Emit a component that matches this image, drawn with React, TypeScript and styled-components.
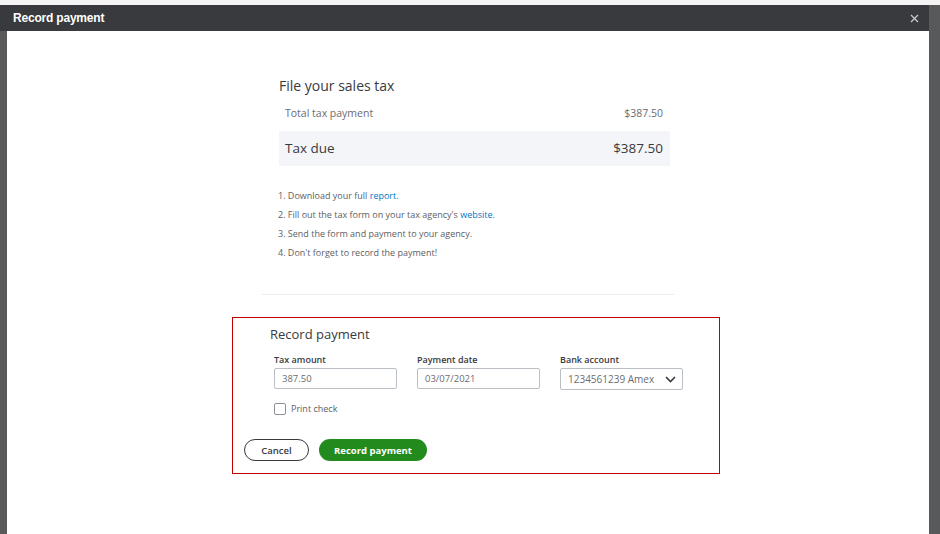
import { createGlobalStyle, styled } from 'styled-components';

const GlobalStyle = createGlobalStyle`
    html, body {
        margin: 0;
        padding: 0;
        background: #f4f4f4;
    }
    body {
        font-family: 'Open Sans', 'Liberation Sans', sans-serif;
        color: #393a3d;
    }
`;

const Screen = styled.div`
    width: 940px;
    height: 534px;
    padding-top: 5px;
    box-sizing: border-box;
    background: #f4f4f4;
    overflow: hidden;
`;

const Backdrop = styled.div`
    display: flex;
    height: 529px;
    background: #58595b;
    padding-left: 7px;
    padding-right: 11px;
`;

const Modal = styled.div`
    flex: 1;
    display: flex;
    flex-direction: column;
    background: #fff;
`;

const TitleBar = styled.div`
    height: 26px;
    background: #393a3d;
    display: flex;
    align-items: center;
    justify-content: space-between;
    padding: 0 10px 0 6px;
    margin-left: -7px;
`;

const TitleText = styled.span`
    font-family: 'Liberation Sans', Arial, sans-serif;
    font-weight: bold;
    font-size: 12px;
    color: #fff;
    letter-spacing: -0.2px;
    padding-left: 7px;
`;

const CloseButton = styled.span`
    display: flex;
    align-items: center;
    color: #c8c8c8;
`;

const Body = styled.div`
    display: flex;
    flex-direction: column;
    align-items: flex-start;
    padding-top: 46px;
`;

const Summary = styled.section`
    width: 391px;
    margin-left: 272px;
`;

const SectionTitle = styled.h2`
    margin: 0;
    font-size: 14px;
    line-height: 18px;
    font-weight: 400;
    color: #393a3d;
`;

const Row = styled.div<{ $big?: boolean }>`
    display: flex;
    justify-content: space-between;
    align-items: center;
    box-sizing: border-box;
    padding: 0 7px 0 6px;
    height: ${(p) => (p.$big ? '35px' : '24px')};
    margin-top: 6px;
    background: ${(p) => (p.$big ? '#f4f5f8' : 'transparent')};
    font-size: ${(p) => (p.$big ? '13.5px' : '10.5px')};
    line-height: ${(p) => (p.$big ? '33px' : '24px')};
    color: ${(p) => (p.$big ? '#393a3d' : '#6b6c72')};
`;

const Steps = styled.ol`
    list-style: none;
    margin: 20px 0 0 -1px;
    padding: 0;
    font-size: 9px;
    line-height: 19px;
    color: #5d5e63;
`;

const StepLink = styled.a`
    color: #0077c5;
    text-decoration: none;
`;

const Divider = styled.hr`
    width: 412px;
    margin: 32px 0 0 255px;
    border: 0;
    border-top: 1px solid #ececec;
`;

const RecordBox = styled.section`
    width: 488px;
    box-sizing: border-box;
    margin: 22px 0 0 225px;
    border: 1px solid #c00000;
    padding: 7px 11px 12px;
`;

const RecordTitle = styled.h3`
    margin: 0 0 0 26px;
    font-size: 13px;
    line-height: 18px;
    font-weight: 400;
    color: #393a3d;
`;

const Fields = styled.div`
    display: grid;
    grid-template-columns: 123px 123px 123px;
    column-gap: 20px;
    margin: 11px 0 0 30px;
`;

const Field = styled.label`
    display: flex;
    flex-direction: column;
    gap: 2px;
`;

const FieldLabel = styled.span`
    font-size: 9px;
    line-height: 12px;
    font-weight: 600;
    color: #393a3d;
`;

const Input = styled.div<{ $tall?: boolean }>`
    height: ${(p) => (p.$tall ? '22px' : '21px')};
    box-sizing: border-box;
    border: 1px solid #babec5;
    border-radius: 2px;
    display: flex;
    align-items: center;
    justify-content: space-between;
    padding: 0 6px 0 7px;
    font-size: 9.5px;
    color: #6b6c72;
`;

const SelectText = styled.span`
    font-size: 10px;
    color: #6b6c72;
`;

const CheckRow = styled.div`
    display: flex;
    align-items: center;
    gap: 5px;
    margin: 12px 0 0 30px;
`;

const CheckBox = styled.span`
    width: 12px;
    height: 12px;
    box-sizing: border-box;
    border: 1px solid #8d9096;
    border-radius: 2px;
`;

const CheckLabel = styled.span`
    font-size: 9px;
    color: #5d5e63;
`;

const Actions = styled.div`
    display: flex;
    gap: 10px;
    margin-top: 24px;
`;

const Button = styled.button<{ $primary?: boolean }>`
    height: 22px;
    box-sizing: border-box;
    border-radius: 11px;
    font-family: 'Open Sans', 'Liberation Sans', sans-serif;
    font-size: 9.5px;
    font-weight: ${(p) => (p.$primary ? 700 : 600)};
    padding: 0;
    width: ${(p) => (p.$primary ? '108px' : '65px')};
    border: ${(p) => (p.$primary ? '0' : '1.5px solid #393a3d')};
    background: ${(p) => (p.$primary ? '#238b1e' : '#fff')};
    color: ${(p) => (p.$primary ? '#fff' : '#393a3d')};
`;

const App = () => (
    <>
        <GlobalStyle />
        <Screen>
            <Backdrop>
                <Modal>
                    <TitleBar>
                        <TitleText>Record payment</TitleText>
                        <CloseButton>
                            <svg width="9" height="9" viewBox="0 0 9 9">
                                <path d="M1 1 L8 8 M8 1 L1 8" stroke="currentColor" strokeWidth="1.3" />
                            </svg>
                        </CloseButton>
                    </TitleBar>
                    <Body>
                        <Summary>
                            <SectionTitle>File your sales tax</SectionTitle>
                            <Row>
                                <span>Total tax payment</span>
                                <span>$387.50</span>
                            </Row>
                            <Row $big>
                                <span>Tax due</span>
                                <span>$387.50</span>
                            </Row>
                            <Steps>
                                <li>1. Download your full <StepLink>report.</StepLink></li>
                                <li>2. Fill out the tax form on your tax agency's <StepLink>website.</StepLink></li>
                                <li>3. Send the form and payment to your agency.</li>
                                <li>4. Don't forget to record the payment!</li>
                            </Steps>
                        </Summary>
                        <Divider />
                        <RecordBox>
                            <RecordTitle>Record payment</RecordTitle>
                            <Fields>
                                <Field>
                                    <FieldLabel>Tax amount</FieldLabel>
                                    <Input>387.50</Input>
                                </Field>
                                <Field>
                                    <FieldLabel>Payment date</FieldLabel>
                                    <Input>03/07/2021</Input>
                                </Field>
                                <Field>
                                    <FieldLabel>Bank account</FieldLabel>
                                    <Input $tall>
                                        <SelectText>1234561239 Amex</SelectText>
                                        <svg width="11" height="7" viewBox="0 0 11 7">
                                            <path d="M1 1 L5.5 5.5 L10 1" fill="none" stroke="#393a3d" strokeWidth="1.6" />
                                        </svg>
                                    </Input>
                                </Field>
                            </Fields>
                            <CheckRow>
                                <CheckBox />
                                <CheckLabel>Print check</CheckLabel>
                            </CheckRow>
                            <Actions>
                                <Button>Cancel</Button>
                                <Button $primary>Record payment</Button>
                            </Actions>
                        </RecordBox>
                    </Body>
                </Modal>
            </Backdrop>
        </Screen>
    </>
);

export default App;
